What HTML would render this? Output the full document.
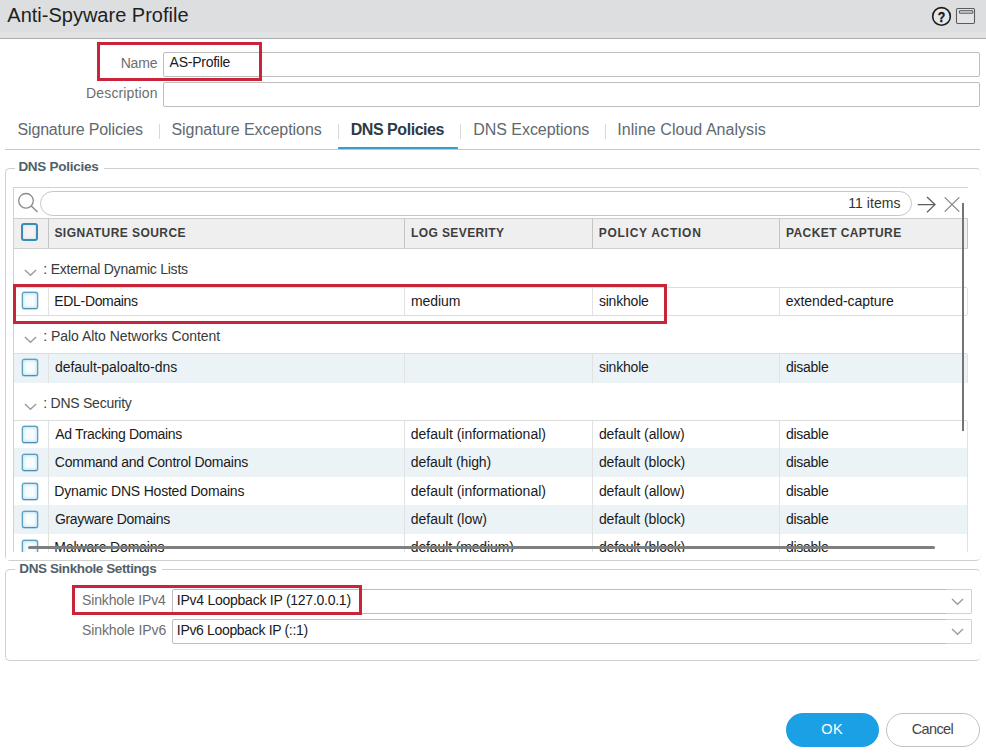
<!DOCTYPE html>
<html><head><meta charset="utf-8"><title>Anti-Spyware Profile</title>
<style>
*{box-sizing:border-box;margin:0;padding:0}
html,body{width:986px;height:755px;overflow:hidden;background:#fff}
body{position:relative;font-family:"Liberation Sans",sans-serif;font-size:14px;color:#1a1a1a}
.a{position:absolute;white-space:nowrap;line-height:1}
.hdr{left:0;top:0;width:986px;height:39px;background:linear-gradient(#dcdee0 0,#dcdee0 32px,#e1e2e4 33px,#e1e2e4 100%);border-bottom:1px solid #a9abad}
.inp{border:1px solid #bdbdbd;border-radius:2px;background:#fff}
.tabsep{width:1px;height:15px;background:#d8d8d8;top:124px}
.cb{width:16px;height:17px;border:1px solid #5f9fbf;border-bottom-color:#4f8fb0;border-radius:2.5px;background:#f8fcfe;box-shadow:inset 0 0 3px 1px #bfe4f5, 0 0 0 0.4px #7fb3cc}
.cbh{width:17px;height:18px;border:2px solid #3c8bb0;border-radius:3px;background:#f7f1f1;box-shadow:inset 0 0 2px 1px #cfeaf6}
.row{left:14px;width:953px}
.alt{background:#ecf3f7}
.vl{width:1px}
.red{border:3px solid #c9243a}
.hl{height:1px;background:#dcdcdc;left:14px;width:953px}
</style></head><body>
<div class="a hdr"></div>
<div class="a" style="left:7.34px;top:5px;font-size:20px;letter-spacing:0.0px;color:#1f1f1f;">Anti-Spyware Profile</div>
<svg class="a" style="left:928px;top:4px" width="52" height="26" viewBox="0 0 52 26">
<circle cx="13.5" cy="12.4" r="8.8" fill="#e6e7e9" stroke="#1c1c1c" stroke-width="1.6"/>
<text x="0" y="0" font-size="15" font-weight="bold" text-anchor="middle" font-family="Liberation Sans, sans-serif" fill="#1c1c1c" stroke="#1c1c1c" stroke-width="0.4" transform="translate(13.6 17.9) scale(0.82 1)">?</text>
<rect x="28.5" y="4.5" width="18" height="15" rx="1.2" fill="#e3e4e6" stroke="#5a5a5a" stroke-width="1.1"/>
<rect x="31.4" y="6.7" width="13.4" height="2.5" rx="0.2" fill="#dcdcdc" stroke="#555" stroke-width="1"/>
</svg>

<div class="a" style="left:120.64px;top:55.5px;font-size:14px;letter-spacing:-0.159px;color:#6e6e6e;">Name</div>
<div class="a inp" style="left:163px;top:52px;width:817px;height:25px"></div>
<div class="a" style="left:169.6px;top:55px;font-size:14px;letter-spacing:-0.255px;color:#1a1a1a;">AS-Profile</div>
<div class="a" style="left:86.1px;top:86px;font-size:14px;letter-spacing:0.138px;color:#6e6e6e;">Description</div>
<div class="a inp" style="left:163px;top:82px;width:817px;height:25px"></div>
<div class="a red" style="left:97px;top:42px;width:165px;height:39px"></div>

<div class="a" style="left:17.48px;top:122px;font-size:16px;letter-spacing:-0.155px;color:#616970;">Signature Policies</div><div class="a tabsep" style="left:159px"></div>
<div class="a" style="left:171.48px;top:122px;font-size:16px;letter-spacing:-0.049px;color:#616970;">Signature Exceptions</div><div class="a tabsep" style="left:338px"></div>
<div class="a" style="left:350.68px;top:122px;font-size:16px;letter-spacing:-0.45px;color:#2f3a44;font-weight:bold;">DNS Policies</div><div class="a tabsep" style="left:460px"></div>
<div class="a" style="left:473.15px;top:122px;font-size:16px;letter-spacing:-0.024px;color:#616970;">DNS Exceptions</div><div class="a tabsep" style="left:605px"></div>
<div class="a" style="left:617.34px;top:122px;font-size:16px;letter-spacing:0.038px;color:#616970;">Inline Cloud Analysis</div>
<div class="a" style="left:5px;top:149px;width:975px;height:1px;background:#c6c6c6"></div>
<div class="a" style="left:338px;top:147px;width:120px;height:2px;background:#3d9dc9;border-radius:1px 1px 0 0"></div>

<!-- fieldset 1 -->
<div class="a" style="left:5px;top:168px;width:971px;height:393px;border:1px solid #cfcfcf;border-right:none;border-radius:5px 0 0 5px"></div>
<div class="a" style="left:975px;top:168px;width:6px;height:8px;border-top:1px solid #cfcfcf;border-right:1px solid #f6f6f6;border-top-right-radius:5px"></div>
<div class="a" style="left:975px;top:553px;width:6px;height:8px;border-bottom:1px solid #cfcfcf;border-right:1px solid #f6f6f6;border-bottom-right-radius:5px"></div>
<div class="a" style="left:15px;top:160px;width:89px;height:16px;background:#fff"></div>
<div class="a" style="left:18.4px;top:160px;font-size:13.5px;letter-spacing:-0.273px;color:#525f6a;font-weight:bold;">DNS Policies</div>
<!-- grid frame -->
<div class="a" style="left:13px;top:187px;width:955px;height:1px;background:#d2d2d2"></div>
<div class="a" style="left:13px;top:187px;width:1px;height:365px;background:#d2d2d2"></div>
<!-- toolbar -->
<svg class="a" style="left:14px;top:190.2px" width="26" height="26" viewBox="0 0 26 26"><circle cx="12" cy="10.8" r="7.3" fill="none" stroke="#8a8a8a" stroke-width="1.3"/><path d="M17.3 16 L23.5 22" stroke="#8a8a8a" stroke-width="1.4"/></svg>
<div class="a" style="left:40px;top:191px;width:872px;height:25px;border:1px solid #c6c6c6;border-radius:13px;background:#fff"></div>
<div class="a" style="left:848.24px;top:195.5px;font-size:14px;letter-spacing:0.047px;color:#333;">11 items</div>
<svg class="a" style="left:915px;top:194px" width="48" height="20" viewBox="0 0 48 20"><path d="M2.7 10.6 H19.6 M12 3 L20 10.6 L12 18.2" fill="none" stroke="#5e5e5e" stroke-width="1.3"/><path d="M29.7 3.4 L44.3 17.6 M44.3 3.4 L29.7 17.6" stroke="#858585" stroke-width="1.3"/></svg>
<!-- header row -->
<div class="a" style="left:14px;top:218px;width:954px;height:31px;background:#efefef;border-top:1px solid #cdcdcd;border-bottom:1px solid #cfcfcf"></div>
<div class="a cbh" style="top:223px;left:21px"></div>
<div class="a" style="left:54.4px;top:227px;font-size:12px;letter-spacing:0.449px;color:#3d3d3d;font-weight:bold;">SIGNATURE SOURCE</div><div class="a" style="left:410.93px;top:227px;font-size:12px;letter-spacing:0.409px;color:#3d3d3d;font-weight:bold;">LOG SEVERITY</div><div class="a" style="left:598.74px;top:227px;font-size:12px;letter-spacing:0.727px;color:#3d3d3d;font-weight:bold;">POLICY ACTION</div><div class="a" style="left:785.93px;top:227px;font-size:12px;letter-spacing:0.421px;color:#3d3d3d;font-weight:bold;">PACKET CAPTURE</div>
<div class="a vl" style="left:48px;top:219px;height:29px;background:#c4c4c4"></div><div class="a vl" style="left:404px;top:219px;height:29px;background:#c4c4c4"></div><div class="a vl" style="left:592px;top:219px;height:29px;background:#c4c4c4"></div><div class="a vl" style="left:779px;top:219px;height:29px;background:#c4c4c4"></div><div class="a vl" style="left:967px;top:219px;height:29px;background:#c4c4c4"></div>

<!-- group 1 -->
<svg class="a" style="left:24px;top:269px" width="13" height="8" viewBox="0 0 13 8"><path d="M0.9 1 L6.5 6.3 L12.1 1" fill="none" stroke="#9e9e9e" stroke-width="1.5"/></svg><div class="a" style="left:43.33px;top:262px;font-size:14px;letter-spacing:-0.237px;color:#3a3a3a;">: External Dynamic Lists</div>
<div class="a hl" style="top:287px"></div><div class="a hl" style="top:315px"></div>
<div class="a cb" style="top:292px;left:22px"></div>
<div class="a" style="left:54.36px;top:294px;font-size:14px;letter-spacing:-0.344px;color:#1a1a1a;">EDL-Domains</div><div class="a" style="left:410.96px;top:294px;font-size:14px;letter-spacing:-0.068px;color:#1a1a1a;">medium</div><div class="a" style="left:598.88px;top:294px;font-size:14px;letter-spacing:-0.2px;color:#1a1a1a;">sinkhole</div><div class="a" style="left:785.81px;top:294px;font-size:14px;letter-spacing:-0.06px;color:#1a1a1a;">extended-capture</div>
<div class="a vl" style="left:48px;top:288px;height:27px;background:#e2e2e2"></div><div class="a vl" style="left:404px;top:288px;height:27px;background:#e2e2e2"></div><div class="a vl" style="left:592px;top:288px;height:27px;background:#e2e2e2"></div><div class="a vl" style="left:779px;top:288px;height:27px;background:#e2e2e2"></div><div class="a vl" style="left:967px;top:288px;height:27px;background:#e2e2e2"></div>
<div class="a red" style="left:13px;top:284px;width:654px;height:40px"></div>

<!-- group 2 -->
<svg class="a" style="left:24px;top:336px" width="13" height="8" viewBox="0 0 13 8"><path d="M0.9 1 L6.5 6.3 L12.1 1" fill="none" stroke="#9e9e9e" stroke-width="1.5"/></svg><div class="a" style="left:43.33px;top:329px;font-size:14px;letter-spacing:-0.052px;color:#3a3a3a;">: Palo Alto Networks Content</div>
<div class="a row alt" style="top:353px;height:30px;border-top:1px solid #dcdcdc"></div>
<div class="a cb" style="top:359px;left:22px"></div>
<div class="a" style="left:54.99px;top:360px;font-size:14px;letter-spacing:-0.042px;color:#1a1a1a;">default-paloalto-dns</div><div class="a" style="left:598.88px;top:360px;font-size:14px;letter-spacing:-0.2px;color:#1a1a1a;">sinkhole</div><div class="a" style="left:785.93px;top:360px;font-size:14px;letter-spacing:-0.262px;color:#1a1a1a;">disable</div>
<div class="a vl" style="left:48px;top:354px;height:29px;background:#e2e2e2"></div><div class="a vl" style="left:404px;top:354px;height:29px;background:#e2e2e2"></div><div class="a vl" style="left:592px;top:354px;height:29px;background:#e2e2e2"></div><div class="a vl" style="left:779px;top:354px;height:29px;background:#e2e2e2"></div><div class="a vl" style="left:967px;top:354px;height:29px;background:#e2e2e2"></div>

<!-- group 3 -->
<svg class="a" style="left:24px;top:403px" width="13" height="8" viewBox="0 0 13 8"><path d="M0.9 1 L6.5 6.3 L12.1 1" fill="none" stroke="#9e9e9e" stroke-width="1.5"/></svg><div class="a" style="left:43.33px;top:396px;font-size:14px;letter-spacing:-0.255px;color:#3a3a3a;">: DNS Security</div>
<div class="a hl" style="top:420px"></div>
<div class="a row alt" style="top:448px;height:29px"></div>
<div class="a row alt" style="top:505px;height:29px"></div>
<div class="a vl" style="left:48px;top:421px;height:131px;background:#e2e2e2"></div><div class="a vl" style="left:404px;top:421px;height:131px;background:#e2e2e2"></div><div class="a vl" style="left:592px;top:421px;height:131px;background:#e2e2e2"></div><div class="a vl" style="left:779px;top:421px;height:131px;background:#e2e2e2"></div><div class="a vl" style="left:967px;top:421px;height:131px;background:#e2e2e2"></div>
<div class="a cb" style="top:426px;left:22px"></div><div class="a" style="left:55.34px;top:427px;font-size:14px;letter-spacing:-0.347px;color:#1a1a1a;">Ad Tracking Domains</div><div class="a" style="left:410.82px;top:427px;font-size:14px;letter-spacing:-0.013px;color:#1a1a1a;">default (informational)</div><div class="a" style="left:598.88px;top:427px;font-size:14px;letter-spacing:-0.089px;color:#1a1a1a;">default (allow)</div><div class="a" style="left:785.93px;top:427px;font-size:14px;letter-spacing:-0.262px;color:#1a1a1a;">disable</div>
<div class="a cb" style="top:454px;left:22px"></div><div class="a" style="left:54.87px;top:455px;font-size:14px;letter-spacing:-0.257px;color:#1a1a1a;">Command and Control Domains</div><div class="a" style="left:410.82px;top:455px;font-size:14px;letter-spacing:-0.101px;color:#1a1a1a;">default (high)</div><div class="a" style="left:598.88px;top:455px;font-size:14px;letter-spacing:-0.11px;color:#1a1a1a;">default (block)</div><div class="a" style="left:785.93px;top:455px;font-size:14px;letter-spacing:-0.262px;color:#1a1a1a;">disable</div>
<div class="a cb" style="top:483px;left:22px"></div><div class="a" style="left:54.36px;top:484px;font-size:14px;letter-spacing:-0.208px;color:#1a1a1a;">Dynamic DNS Hosted Domains</div><div class="a" style="left:410.82px;top:484px;font-size:14px;letter-spacing:-0.013px;color:#1a1a1a;">default (informational)</div><div class="a" style="left:598.88px;top:484px;font-size:14px;letter-spacing:-0.089px;color:#1a1a1a;">default (allow)</div><div class="a" style="left:785.93px;top:484px;font-size:14px;letter-spacing:-0.262px;color:#1a1a1a;">disable</div>
<div class="a cb" style="top:511px;left:22px"></div><div class="a" style="left:54.93px;top:512px;font-size:14px;letter-spacing:-0.306px;color:#1a1a1a;">Grayware Domains</div><div class="a" style="left:410.82px;top:512px;font-size:14px;letter-spacing:-0.005px;color:#1a1a1a;">default (low)</div><div class="a" style="left:598.88px;top:512px;font-size:14px;letter-spacing:-0.11px;color:#1a1a1a;">default (block)</div><div class="a" style="left:785.93px;top:512px;font-size:14px;letter-spacing:-0.262px;color:#1a1a1a;">disable</div>
<div class="a cb" style="top:540px;left:22px"></div><div class="a" style="left:54.36px;top:540px;font-size:14px;letter-spacing:-0.138px;color:#1a1a1a;">Malware Domains</div><div class="a" style="left:410.82px;top:540px;font-size:14px;letter-spacing:-0.136px;color:#1a1a1a;">default (medium)</div><div class="a" style="left:598.88px;top:540px;font-size:14px;letter-spacing:-0.11px;color:#1a1a1a;">default (block)</div><div class="a" style="left:785.93px;top:540px;font-size:14px;letter-spacing:-0.262px;color:#1a1a1a;">disable</div>
<div class="a" style="left:6px;top:552px;width:970px;height:8px;background:#fff"></div>
<!-- scrollbars -->
<div class="a" style="left:28px;top:546px;width:907px;height:3px;background:#7f7f7f;border-radius:1.5px"></div>
<div class="a" style="left:962px;top:203px;width:2px;height:228px;background:#747474"></div>

<!-- fieldset 2 -->
<div class="a" style="left:5px;top:569px;width:971px;height:92px;border:1px solid #cfcfcf;border-right:none;border-radius:5px 0 0 5px"></div>
<div class="a" style="left:975px;top:569px;width:6px;height:8px;border-top:1px solid #cfcfcf;border-right:1px solid #f6f6f6;border-top-right-radius:5px"></div>
<div class="a" style="left:975px;top:653px;width:6px;height:8px;border-bottom:1px solid #cfcfcf;border-right:1px solid #f6f6f6;border-bottom-right-radius:5px"></div>
<div class="a" style="left:15px;top:562px;width:147px;height:16px;background:#fff"></div>
<div class="a" style="left:19.3px;top:562px;font-size:13.5px;letter-spacing:-0.407px;color:#525f6a;font-weight:bold;">DNS Sinkhole Settings</div>
<div class="a" style="left:82.04px;top:593px;font-size:14px;letter-spacing:-0.151px;color:#6e6e6e;">Sinkhole IPv4</div>
<div class="a inp" style="left:172px;top:589px;width:800px;height:25px"></div>
<div class="a" style="left:176.84px;top:593px;font-size:14px;letter-spacing:-0.254px;color:#1a1a1a;">IPv4 Loopback IP (127.0.0.1)</div>
<div class="a" style="left:82.04px;top:623px;font-size:14px;letter-spacing:-0.122px;color:#6e6e6e;">Sinkhole IPv6</div>
<div class="a inp" style="left:172px;top:619px;width:800px;height:25px"></div>
<div class="a" style="left:176.84px;top:623px;font-size:14px;letter-spacing:-0.335px;color:#1a1a1a;">IPv6 Loopback IP (::1)</div>
<div class="a" style="left:946px;top:589px;width:26px;height:25px;border:1px solid #d2d2d2;border-left:none;border-radius:0 2px 2px 0;background:#fff"></div>
<div class="a" style="left:946px;top:619px;width:26px;height:25px;border:1px solid #d2d2d2;border-left:none;border-radius:0 2px 2px 0;background:#fff"></div>
<svg class="a" style="left:951px;top:598px" width="13" height="8" viewBox="0 0 13 8"><path d="M1 1 L6.5 6.3 L12 1" fill="none" stroke="#9a9a9a" stroke-width="1.3"/></svg>
<svg class="a" style="left:951px;top:628px" width="13" height="8" viewBox="0 0 13 8"><path d="M1 1 L6.5 6.3 L12 1" fill="none" stroke="#9a9a9a" stroke-width="1.3"/></svg>
<div class="a red" style="left:72px;top:585px;width:290px;height:30px"></div>

<!-- buttons -->
<div class="a" style="left:786px;top:713px;width:93px;height:34px;border-radius:17px;background:#1ba0e6"></div>
<div class="a" style="left:821.13px;top:722px;font-size:14.5px;letter-spacing:0.652px;color:#fff;">OK</div>
<div class="a" style="left:886px;top:713px;width:94px;height:34px;border-radius:17px;border:1px solid #c2c2c2;background:#fff"></div>
<div class="a" style="left:911.71px;top:722px;font-size:14.5px;letter-spacing:-0.613px;color:#444;">Cancel</div>
</body></html>
